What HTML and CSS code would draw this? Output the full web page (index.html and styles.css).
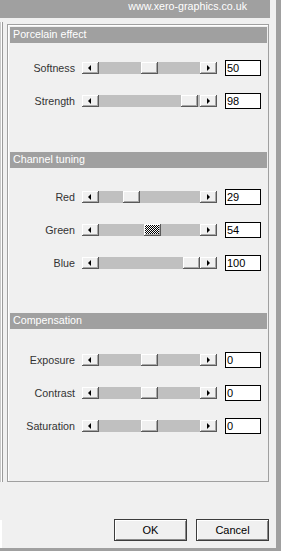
FILE: index.html
```html
<!DOCTYPE html>
<html>
<head>
<meta charset="utf-8">
<link rel="stylesheet" href="styles.css">
</head>
<body>
<div class="window">
  <div class="main">
    <div class="topbar">www.xero-graphics.co.uk</div>
    <div class="body">
      <div class="edge"></div>
      <div class="group">
        <div class="section">
          <div class="header">Porcelain effect</div>
          <div class="rows rows-1">
            <div class="row"><span class="label">Softness</span>
              <div class="sb"><div class="btn"><i class="arr-l"></i></div><div class="track"><div class="thumb" style="left:42px"></div></div><div class="btn"><i class="arr-r"></i></div></div>
              <div class="edit">50</div></div>
            <div class="row"><span class="label">Strength</span>
              <div class="sb"><div class="btn"><i class="arr-l"></i></div><div class="track"><div class="thumb" style="left:82px"></div></div><div class="btn"><i class="arr-r"></i></div></div>
              <div class="edit">98</div></div>
          </div>
        </div>
        <div class="section section-2">
          <div class="header">Channel tuning</div>
          <div class="rows rows-2">
            <div class="row"><span class="label">Red</span>
              <div class="sb"><div class="btn"><i class="arr-l"></i></div><div class="track"><div class="thumb" style="left:24px"></div></div><div class="btn"><i class="arr-r"></i></div></div>
              <div class="edit">29</div></div>
            <div class="row"><span class="label">Green</span>
              <div class="sb"><div class="btn"><i class="arr-l"></i></div><div class="track"><div class="thumb thumb-active" style="left:45px"></div></div><div class="btn"><i class="arr-r"></i></div></div>
              <div class="edit">54</div></div>
            <div class="row"><span class="label">Blue</span>
              <div class="sb"><div class="btn"><i class="arr-l"></i></div><div class="track"><div class="thumb" style="left:84px"></div></div><div class="btn"><i class="arr-r"></i></div></div>
              <div class="edit">100</div></div>
          </div>
        </div>
        <div class="section section-3">
          <div class="header">Compensation</div>
          <div class="rows rows-3">
            <div class="row"><span class="label">Exposure</span>
              <div class="sb"><div class="btn"><i class="arr-l"></i></div><div class="track"><div class="thumb" style="left:42px"></div></div><div class="btn"><i class="arr-r"></i></div></div>
              <div class="edit">0</div></div>
            <div class="row"><span class="label">Contrast</span>
              <div class="sb"><div class="btn"><i class="arr-l"></i></div><div class="track"><div class="thumb" style="left:42px"></div></div><div class="btn"><i class="arr-r"></i></div></div>
              <div class="edit">0</div></div>
            <div class="row"><span class="label">Saturation</span>
              <div class="sb"><div class="btn"><i class="arr-l"></i></div><div class="track"><div class="thumb" style="left:42px"></div></div><div class="btn"><i class="arr-r"></i></div></div>
              <div class="edit">0</div></div>
          </div>
        </div>
      </div>
    </div>
    <div class="footer">
      <div class="stub"></div>
      <div class="buttons">
        <button class="pbtn">OK</button>
        <button class="pbtn">Cancel</button>
      </div>
    </div>
    <div class="bottomline"></div>
  </div>
  <div class="rightstrip"></div>
</div>
</body>
</html>
```
FILE: styles.css
```css
* { box-sizing: border-box; }
html, body { margin: 0; padding: 0; }
body {
  width: 281px;
  height: 551px;
  overflow: hidden;
  background: #f0f0f0;
  font-family: "Liberation Sans", Arial, sans-serif;
}
.window { display: flex; height: 551px; }
.main { width: 276px; display: flex; flex-direction: column; }
.rightstrip { width: 5px; background: #a0a0a0; }

.topbar {
  width: 270px;
  height: 18px;
  background: #a0a0a0;
  color: #fff;
  font-size: 10.7px;
  line-height: 12px;
  text-align: right;
  padding-right: 23px;
}

.body { display: flex; margin-top: 4px; height: 460px; }
.edge {
  width: 3px;
  height: 460px;
  background: #fff;
  border-right: 1px solid #9a9a9a;
  border-left: 1px solid #c8c8c8;
}
.group {
  margin-left: 4px;
  margin-top: 2px;
  width: 262px;
  height: 458px;
  border: 1px solid #a0a0a0;
  box-shadow: inset 1px 1px 0 #fff;
  padding: 2px 1px 0 2px;
}
.header {
  height: 16px;
  background: #a0a0a0;
  color: #fff;
  font-size: 10.7px;
  line-height: 14px;
  padding-left: 3px;
}
.section-2 .header { margin-top: 43px; }
.section-3 .header { margin-top: 42px; }

.rows { display: flex; flex-direction: column; gap: 17px; }
.rows-1 { padding-top: 17px; }
.rows-2 { padding-top: 21px; }
.rows-3 { padding-top: 23px; }

.row { display: flex; align-items: center; height: 16px; margin-left: -2px; }
.label {
  width: 67px;
  margin-right: 7px;
  text-align: right;
  font-size: 10.7px;
  color: #333;
  white-space: nowrap;
}
.sb { display: flex; width: 135px; height: 12px; }
.btn {
  width: 17px;
  height: 12px;
  background: #f0f0f0;
  box-shadow: inset -1px -1px 0 #5a5a5a, inset 1px 1px 0 #fff, inset -2px -2px 0 #a8a8a8;
  display: flex;
  align-items: center;
  justify-content: center;
  flex: none;
}
.arr-l, .arr-r { display: block; width: 0; height: 0; border-top: 3px solid transparent; border-bottom: 3px solid transparent; }
.arr-l { border-right: 3px solid #000; margin-right: 2px; }
.arr-r { border-left: 3px solid #000; margin-left: 0; }
.track { position: relative; flex: 1; height: 12px; background: #c0c0c0; }
.thumb {
  position: absolute;
  top: 0;
  width: 17px;
  height: 12px;
  background: #f0f0f0;
  box-shadow: inset -1px -1px 0 #5a5a5a, inset 1px 1px 0 #fff, inset -2px -2px 0 #a8a8a8;
}
.thumb-active {
  background: repeating-conic-gradient(#000 0 25%, #fff 0 50%) 0 0 / 2px 2px;
  box-shadow: inset -1px -1px 0 #5a5a5a, inset 1px 1px 0 #fff, inset -2px -2px 0 #a8a8a8;
}
.edit {
  margin-left: 8px;
  width: 36px;
  height: 16px;
  background: #fff;
  border: 1px solid #000;
  font-size: 11px;
  line-height: 14px;
  padding-left: 1px;
  color: #000;
}

.footer { display: flex; height: 66px; }
.stub { width: 2px; height: 28px; margin-top: 38px; background: #fff; }
.buttons { margin-left: auto; margin-right: 7px; margin-top: 37px; display: flex; gap: 9px; }
.pbtn {
  width: 73px;
  height: 22px;
  padding: 0;
  background: #f0f0f0;
  border: 1px solid #3c3c3c;
  box-shadow: inset 1px 1px 0 #fff, inset -1px -1px 0 #8a8a8a;
  font-family: "Liberation Sans", Arial, sans-serif;
  font-size: 11px;
  color: #000;
}
.bottomline { height: 3px; background: #a0a0a0; }
```
